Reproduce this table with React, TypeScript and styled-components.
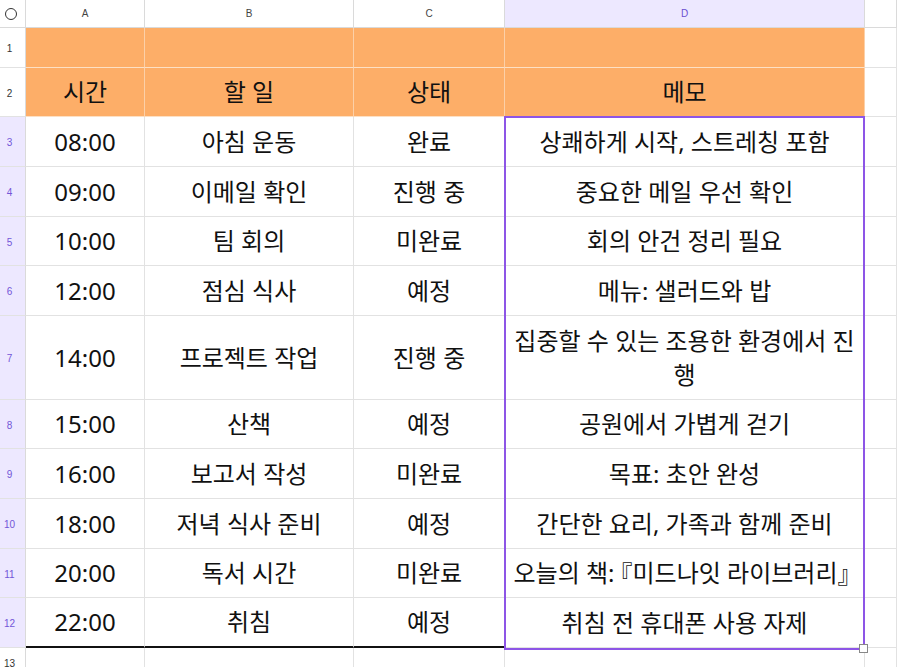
import React from "react";
import styled, { createGlobalStyle } from "styled-components";

const Global = createGlobalStyle`
  html, body { margin: 0; padding: 0; background: #fff; overflow: hidden; }
  body { font-family: "Noto Sans", "Noto Sans CJK KR", sans-serif; }
`;

const Sheet = styled.div`
  display: grid;
  grid-template-columns: 26px 119px 209px 151px 360px 1fr;
  grid-template-rows: 28px 40px 49px 50px 50px 49px 50px 84px 49px 50px 50px 49px 50px 30px;
  width: 897px;
  height: 667px;
  overflow: hidden;
  position: relative;
`;

const Corner = styled.div`
  border-right: 1px solid #dadada;
  border-bottom: 1px solid #dadada;
  display: flex;
  align-items: center;
  justify-content: center;
  padding-right: 4px;
  background: #fff;
`;

const Circle = styled.div`
  width: 10px;
  height: 10px;
  border: 1.3px solid #333;
  border-radius: 50%;
`;

const ColHead = styled.div<{ $active?: boolean }>`
  background: ${(p) => (p.$active ? "#ede8ff" : "#fff")};
  color: ${(p) => (p.$active ? "#6b4fd0" : "#444")};
  border-right: 1px solid #dadada;
  border-bottom: 1px solid #dadada;
  font-family: "Liberation Sans", Arial, sans-serif;
  font-size: 10px;
  display: flex;
  align-items: center;
  justify-content: center;
`;

const RowHead = styled.div<{ $active?: boolean }>`
  background: ${(p) => (p.$active ? "#ede8ff" : "#fff")};
  color: ${(p) => (p.$active ? "#7356d8" : "#333")};
  border-right: 1px solid #dadada;
  border-bottom: 1px solid #e2e2e2;
  font-family: "Liberation Sans", Arial, sans-serif;
  font-size: 10px;
  display: flex;
  align-items: center;
  justify-content: center;
  padding: 2px 6px 0 0;
`;

const Cell = styled.div<{ $orange?: boolean; $thick?: boolean; $nowrap?: boolean }>`
  background: ${(p) => (p.$orange ? "#fdae68" : "#fff")};
  border-right: 1px solid ${(p) => (p.$orange ? "#fcd0a8" : "#e2e2e2")};
  border-bottom: ${(p) =>
    p.$thick ? "2px solid #111" : `1px solid ${p.$orange ? "#fde0c4" : "#e2e2e2"}`};
  display: flex;
  align-items: center;
  justify-content: center;
  text-align: center;
  font-size: 24px;
  line-height: 34px;
  color: #111;
  padding: 0 ${(p) => (p.$nowrap ? "2px" : "8px")};
  box-sizing: border-box;
  overflow: hidden;
  word-break: break-all;
  white-space: ${(p) => (p.$nowrap ? "nowrap" : "normal")};
`;

const Bracket = styled.span<{ $open?: boolean }>`
  font-family: "Noto Sans CJK KR", sans-serif;
  margin-left: ${(p) => (p.$open ? "-6px" : "0")};
  margin-right: ${(p) => (p.$open ? "0" : "-6px")};
`;

const Selection = styled.div`
  grid-column: 5 / 6;
  grid-row: 4 / 14;
  position: absolute;
  top: -1px;
  left: -1px;
  right: 0;
  bottom: -2px;
  border: 2px solid #8d55e6;
  pointer-events: none;
  z-index: 2;
`;

const Handle = styled.div`
  position: absolute;
  right: -5px;
  bottom: -5px;
  width: 7px;
  height: 7px;
  background: #fff;
  border: 1px solid #888;
`;

const columns = ["A", "B", "C", "D"];

const rows: [string, string, string, React.ReactNode][] = [
  ["08:00", "아침 운동", "완료", "상쾌하게 시작, 스트레칭 포함"],
  ["09:00", "이메일 확인", "진행 중", "중요한 메일 우선 확인"],
  ["10:00", "팀 회의", "미완료", "회의 안건 정리 필요"],
  ["12:00", "점심 식사", "예정", "메뉴: 샐러드와 밥"],
  ["14:00", "프로젝트 작업", "진행 중", "집중할 수 있는 조용한 환경에서 진행"],
  ["15:00", "산책", "예정", "공원에서 가볍게 걷기"],
  ["16:00", "보고서 작성", "미완료", "목표: 초안 완성"],
  ["18:00", "저녁 식사 준비", "예정", "간단한 요리, 가족과 함께 준비"],
  [
    "20:00",
    "독서 시간",
    "미완료",
    <>
      오늘의 책: <Bracket $open>『</Bracket>미드나잇 라이브러리<Bracket>』</Bracket>
    </>,
  ],
  ["22:00", "취침", "예정", "취침 전 휴대폰 사용 자제"],
];

export default function App() {
  return (
    <>
      <Global />
      <Sheet>
        <Corner>
          <Circle />
        </Corner>
        {columns.map((c) => (
          <ColHead key={c} $active={c === "D"}>
            {c}
          </ColHead>
        ))}
        <ColHead />

        <RowHead>1</RowHead>
        <Cell $orange />
        <Cell $orange />
        <Cell $orange />
        <Cell $orange />
        <Cell />

        <RowHead>2</RowHead>
        <Cell $orange>시간</Cell>
        <Cell $orange>할 일</Cell>
        <Cell $orange>상태</Cell>
        <Cell $orange>메모</Cell>
        <Cell />

        {rows.map((r, i) => {
          const last = i === rows.length - 1;
          return (
            <React.Fragment key={i}>
              <RowHead $active>{i + 3}</RowHead>
              <Cell $thick={last}>{r[0]}</Cell>
              <Cell $thick={last}>{r[1]}</Cell>
              <Cell $thick={last}>{r[2]}</Cell>
              <Cell $nowrap={i === 8}>{r[3]}</Cell>
              <Cell />
            </React.Fragment>
          );
        })}

        <RowHead>13</RowHead>
        <Cell />
        <Cell />
        <Cell />
        <Cell />
        <Cell />

        <Selection>
          <Handle />
        </Selection>
      </Sheet>
    </>
  );
}
